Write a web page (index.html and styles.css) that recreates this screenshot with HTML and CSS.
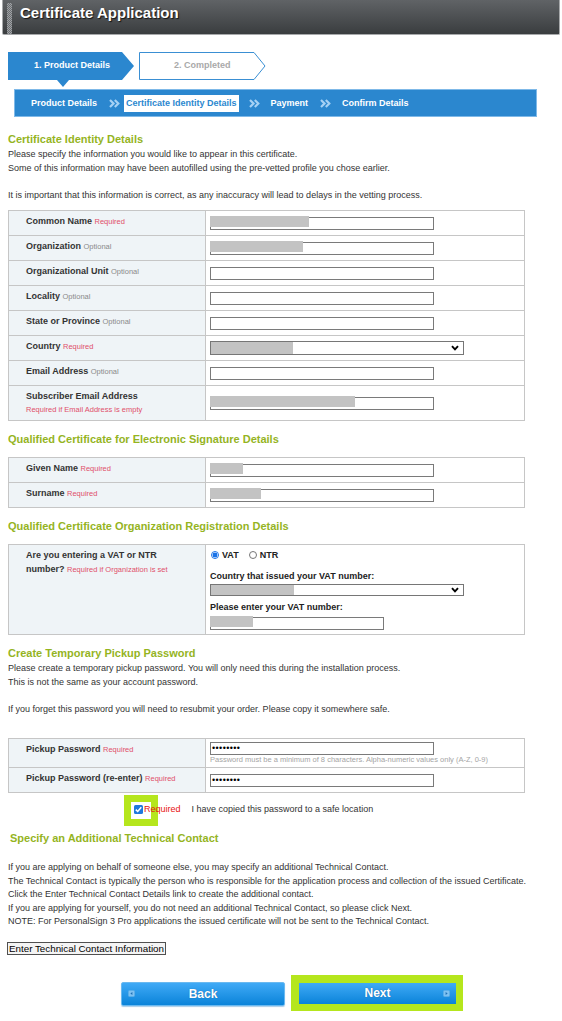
FILE: index.html
```html
<!DOCTYPE html>
<html lang="en">
<head>
<meta charset="utf-8">
<title>Certificate Application</title>
<link rel="stylesheet" href="styles.css">
</head>
<body>
<div class="header"><span class="grip"></span><h1 class="title">Certificate Application</h1></div>

<div class="steps">
  <div class="step step-active">
    <svg class="step-shape" width="127" height="36" viewBox="0 0 127 36"><polygon points="0,0 114,0 126,14 114,28 61,28 55,35 49,28 0,28" fill="#2b87cf"/></svg>
    <span class="step-label">1. Product Details</span>
  </div>
  <div class="step step-next">
    <svg class="step-shape" width="127" height="28" viewBox="0 0 127 28"><polygon points="0.5,0.5 115,0.5 126,14 115,27.5 0.5,27.5" fill="#fff" stroke="#3a8fd3"/></svg>
    <span class="step-label">2. Completed</span>
  </div>
</div>

<div class="crumbs">
  <span class="crumb">Product Details</span>
  <svg class="chev" width="11" height="9" viewBox="0 0 11 9"><path d="M1 1 L4.5 4.5 L1 8 M5.8 1 L9.3 4.5 L5.8 8" fill="none" stroke="#a6d1f4" stroke-width="2.2"/></svg>
  <span class="crumb crumb-current">Certificate Identity Details</span>
  <svg class="chev" width="11" height="9" viewBox="0 0 11 9"><path d="M1 1 L4.5 4.5 L1 8 M5.8 1 L9.3 4.5 L5.8 8" fill="none" stroke="#a6d1f4" stroke-width="2.2"/></svg>
  <span class="crumb">Payment</span>
  <svg class="chev" width="11" height="9" viewBox="0 0 11 9"><path d="M1 1 L4.5 4.5 L1 8 M5.8 1 L9.3 4.5 L5.8 8" fill="none" stroke="#a6d1f4" stroke-width="2.2"/></svg>
  <span class="crumb">Confirm Details</span>
</div>

<div class="content">
  <h2 class="sec-title">Certificate Identity Details</h2>
  <p class="text">Please specify the information you would like to appear in this certificate.<br>Some of this information may have been autofilled using the pre-vetted profile you chose earlier.<br><br>It is important that this information is correct, as any inaccuracy will lead to delays in the vetting process.</p>

  <div class="form">
    <div class="lbl">Common Name <span class="req">Required</span></div>
    <div class="fld"><div class="input"><span class="redact" style="width:99px"></span></div></div>

    <div class="lbl">Organization <span class="opt">Optional</span></div>
    <div class="fld"><div class="input"><span class="redact" style="width:93px"></span></div></div>

    <div class="lbl">Organizational Unit <span class="opt">Optional</span></div>
    <div class="fld"><div class="input"></div></div>

    <div class="lbl">Locality <span class="opt">Optional</span></div>
    <div class="fld"><div class="input"></div></div>

    <div class="lbl">State or Province <span class="opt">Optional</span></div>
    <div class="fld"><div class="input"></div></div>

    <div class="lbl">Country <span class="req">Required</span></div>
    <div class="fld"><div class="select"><span class="redact-sel" style="width:82px"></span><svg class="sel-arrow" width="8" height="6" viewBox="0 0 8 6"><path d="M1 1.2 L4 4.4 L7 1.2" fill="none" stroke="#000" stroke-width="1.9"/></svg></div></div>

    <div class="lbl">Email Address <span class="opt">Optional</span></div>
    <div class="fld"><div class="input"></div></div>

    <div class="lbl tall">Subscriber Email Address<span class="req-line">Required if Email Address is empty</span></div>
    <div class="fld tall"><div class="input"><span class="redact" style="width:145px"></span></div></div>
  </div>

  <h2 class="sec-title sec-gap">Qualified Certificate for Electronic Signature Details</h2>
  <div class="form form-after-title">
    <div class="lbl">Given Name <span class="req">Required</span></div>
    <div class="fld"><div class="input"><span class="redact" style="width:33px"></span></div></div>

    <div class="lbl">Surname <span class="req">Required</span></div>
    <div class="fld"><div class="input"><span class="redact" style="width:51px"></span></div></div>
  </div>

  <h2 class="sec-title sec-gap">Qualified Certificate Organization Registration Details</h2>
  <div class="form form-after-title">
    <div class="lbl lbl-vat"><span class="vat-line">Are you entering a VAT or NTR</span><span class="vat-line">number? <span class="req">Required if Organization is set</span></span></div>
    <div class="fld-col">
      <div class="radios">
        <span class="radio radio-on"></span><span class="radio-text">VAT</span>
        <span class="radio radio-off"></span><span class="radio-text">NTR</span>
      </div>
      <div class="vat-q">Country that issued your VAT number:</div>
      <div class="select select-sm"><span class="redact-sel" style="width:83px"></span><svg class="sel-arrow" width="8" height="6" viewBox="0 0 8 6"><path d="M1 1.2 L4 4.4 L7 1.2" fill="none" stroke="#000" stroke-width="1.9"/></svg></div>
      <div class="vat-q vat-q2">Please enter your VAT number:</div>
      <div class="input input-vat"><span class="redact" style="width:43px"></span></div>
    </div>
  </div>

  <h2 class="sec-title sec-gap">Create Temporary Pickup Password</h2>
  <p class="text">Please create a temporary pickup password. You will only need this during the installation process.<br>This is not the same as your account password.<br><br>If you forget this password you will need to resubmit your order. Please copy it somewhere safe.</p>

  <div class="form form-pw">
    <div class="lbl">Pickup Password <span class="req">Required</span></div>
    <div class="fld fld-pw">
      <div class="input input-pw">••••••••</div>
      <div class="hint">Password must be a minimum of 8 characters. Alpha-numeric values only (A-Z, 0-9)</div>
    </div>

    <div class="lbl">Pickup Password (re-enter) <span class="req">Required</span></div>
    <div class="fld"><div class="input input-pw">••••••••</div></div>
  </div>

  <div class="confirm">
    <span class="check-wrap"><span class="checkbox"><svg width="9" height="9" viewBox="0 0 9 9"><rect width="9" height="9" rx="1.5" fill="#1f78dd"/><path d="M1.8 4.6 L3.7 6.5 L7.3 2.3" fill="none" stroke="#fff" stroke-width="1.5"/></svg></span></span>
    <span class="confirm-req">Required</span>
    <span class="confirm-text">I have copied this password to a safe location</span>
  </div>

  <h2 class="sec-title tech-title">Specify an Additional Technical Contact</h2>
  <p class="text tech-text">If you are applying on behalf of someone else, you may specify an additional Technical Contact.<br>The Technical Contact is typically the person who is responsible for the application process and collection of the issued Certificate.<br>Click the Enter Technical Contact Details link to create the additional contact.<br>If you are applying for yourself, you do not need an additional Technical Contact, so please click Next.<br>NOTE: For PersonalSign 3 Pro applications the issued certificate will not be sent to the Technical Contact.</p>

  <button class="tech-btn" type="button">Enter Technical Contact Information</button>

  <div class="nav">
    <button class="navbtn navbtn-back" type="button">
      <svg class="btn-ico" width="7" height="7" viewBox="0 0 7 7"><rect x="0.5" y="0.5" width="6" height="6" rx="1" fill="#7dc1f2" stroke="#5aaee9"/><path d="M4.4 2 L2.4 3.5 L4.4 5 Z" fill="#1d6fb6"/></svg>
      <span class="btn-text">Back</span>
      <span class="btn-spacer"></span>
    </button>
    <div class="next-hl">
      <button class="navbtn navbtn-next" type="button">
        <span class="btn-spacer"></span>
        <span class="btn-text">Next</span>
        <svg class="btn-ico" width="7" height="7" viewBox="0 0 7 7"><rect x="0.5" y="0.5" width="6" height="6" rx="1" fill="#7dc1f2" stroke="#5aaee9"/><path d="M2.6 2 L4.6 3.5 L2.6 5 Z" fill="#1d6fb6"/></svg>
      </button>
    </div>
  </div>
</div>
</body>
</html>
```

FILE: styles.css
```css
*, *::before, *::after { box-sizing: border-box; }

body {
  margin: 0;
  width: 562px;
  font-family: "Liberation Sans", Arial, Helvetica, sans-serif;
  font-size: 9px;
  color: #333;
  background: #fff;
}

/* Header */
.header {
  display: flex;
  align-items: flex-start;
  height: 35px;
  margin: 0 2px;
  border: 1px solid #a7a9ab;
  border-top: none;
  border-radius: 0 0 2px 2px;
  background: linear-gradient(#606366, #3a3d3f);
}
.grip {
  width: 5px;
  height: 31px;
  margin: 3px 0 0 4px;
  background: repeating-conic-gradient(#a0a3a6 0 25%, #6b6e71 0 50%) 0 0 / 2px 2px;
}
.title {
  margin: 4px 0 0 8px;
  font-size: 15px;
  line-height: 18px;
  font-weight: bold;
  color: #fff;
  text-shadow: 1px 1px 1px #151515;
}

/* Steps */
.steps {
  display: flex;
  gap: 5px;
  margin: 17px 0 0 8px;
}
.step {
  position: relative;
  width: 126px;
  height: 28px;
}
.step-shape {
  position: absolute;
  left: 0;
  top: 0;
  overflow: visible;
}
.step-label {
  position: relative;
  display: block;
  line-height: 27px;
  font-size: 9px;
  font-weight: bold;
}
.step-active .step-label { color: #fff; padding-left: 26px; }
.step-next .step-label { color: #a9a9a9; padding-left: 35px; }

/* Crumb bar */
.crumbs {
  display: flex;
  align-items: center;
  width: 523px;
  height: 28px;
  margin: 9px 0 0 14px;
  padding-left: 16px;
  background: #2b87cf;
  border: 1px solid #7fb9e8;
}
.crumb {
  color: #fff;
  font-size: 9px;
  font-weight: bold;
}
.crumb-current {
  background: #fff;
  color: #2b87cf;
  padding: 0 2px;
  line-height: 17px;
  margin-left: -7px;
  margin-right: -2px;
}
.chev {
  display: block;
  margin: 0 11px 0 12px;
}

/* Content */
.content {
  padding: 15px 8px 20px;
}
.sec-title {
  margin: 0;
  font-size: 11px;
  line-height: 14px;
  font-weight: bold;
  color: #95b41f;
}
.sec-gap { margin-top: 11px; }
.text {
  margin: 2px 0 0;
  line-height: 13.5px;
  color: #333;
}

/* Forms */
.form {
  margin-top: 8px;
  width: 517px;
  display: grid;
  grid-template-columns: 197px 1fr;
  border: 1px solid #c6c6c6;
  border-bottom: none;
}
.form-after-title { margin-top: 11px; }
.lbl {
  background: #eff4f7;
  border-right: 1px solid #c6c6c6;
  border-bottom: 1px solid #c6c6c6;
  padding: 3px 20px 0 17px;
  line-height: 14px;
  font-weight: bold;
  color: #333;
  min-height: 25px;
}
.lbl-vat .vat-line { display: block; }
.fld {
  border-bottom: 1px solid #c6c6c6;
  display: flex;
  align-items: center;
  padding-left: 4px;
  min-height: 25px;
}
.tall { min-height: 35px; }
.req {
  color: #e0506b;
  font-weight: normal;
  font-size: 7.5px;
}
.opt {
  color: #8a8a8a;
  font-weight: normal;
  font-size: 7.5px;
}
.req-line {
  display: block;
  color: #e0506b;
  font-weight: normal;
  font-size: 7.5px;
}
.input {
  width: 224px;
  height: 13px;
  border: 1px solid #7a7a7a;
  background: #fff;
  display: flex;
  align-items: flex-start;
}
.redact {
  display: block;
  flex: none;
  height: 11px;
  margin: -2px 0 0 -1px;
  background: #c3c3c3;
}
.select {
  width: 254px;
  height: 14px;
  border: 1px solid #767676;
  background: #fff;
  display: flex;
  align-items: stretch;
  justify-content: space-between;
  padding-right: 4px;
}
.select-sm { height: 12px; margin-top: 1px; }
.redact-sel {
  display: block;
  background: #c3c3c3;
}
.sel-arrow {
  align-self: center;
  display: block;
}

/* VAT cell */
.fld-col {
  border-bottom: 1px solid #c6c6c6;
  padding: 3px 0 4px 4px;
}
.radios {
  display: flex;
  align-items: center;
  height: 13px;
}
.radio {
  display: block;
  width: 8px;
  height: 8px;
  border-radius: 50%;
  margin: 0 3px 0 1px;
}
.radio-on {
  border: 1px solid #1a73e8;
  background: radial-gradient(circle, #1a73e8 0 2.2px, #fff 2.7px);
}
.radio-off {
  border: 1px solid #767676;
  background: #fff;
  margin-left: 10px;
}
.radio-text {
  font-weight: bold;
  color: #222;
}
.vat-q {
  margin-top: 8px;
  line-height: 14px;
  font-weight: bold;
  color: #222;
}
.vat-q2 { margin-top: 4px; }
.input-vat { width: 174px; margin-top: 3px; }

/* Password */
.form-pw { margin-top: 22px; }
.fld-pw {
  flex-direction: column;
  align-items: flex-start;
  justify-content: flex-start;
  padding-top: 3px;
  padding-bottom: 2px;
}
.input-pw {
  align-items: center;
  font-size: 9px;
  line-height: 11px;
  letter-spacing: 0.4px;
  color: #000;
  padding-left: 1px;
}
.hint {
  line-height: 10px;
  font-size: 7.5px;
  color: #a5a5a5;
}

/* Confirm checkbox */
.confirm {
  display: flex;
  align-items: center;
  margin-top: 9px;
  padding-left: 126px;
  line-height: 14px;
}
.check-wrap {
  position: relative;
  display: block;
  width: 9px;
  height: 9px;
}
.check-wrap::before {
  content: "";
  position: absolute;
  left: -10px;
  top: -10px;
  width: 34px;
  height: 31px;
  border: 7px solid #b5e61d;
}
.checkbox {
  position: relative;
  display: block;
  width: 9px;
  height: 9px;
}
.checkbox svg { display: block; }
.confirm-req {
  position: relative;
  color: #e81010;
  margin-left: 1px;
}
.confirm-text {
  margin-left: 11px;
  color: #333;
}

/* Technical contact */
.tech-title {
  margin-top: 15px;
  padding-left: 2px;
}
.tech-text { margin-top: 16px; }
.tech-btn {
  display: block;
  margin: 13px 0 0 -1px;
  height: 13px;
  padding: 0 1px;
  font-family: "Liberation Sans", Arial, Helvetica, sans-serif;
  font-size: 9.8px;
  line-height: 11px;
  color: #000;
  background: #f4f4f4;
  border: 1px solid #505050;
  border-radius: 0;
}

/* Nav buttons */
.nav {
  display: flex;
  align-items: flex-start;
  margin-top: 20px;
  padding-left: 113px;
}
.navbtn {
  display: flex;
  align-items: center;
  padding: 0 6px;
  font-family: "Liberation Sans", Arial, Helvetica, sans-serif;
  font-size: 12px;
  font-weight: bold;
  color: #fff;
  text-shadow: 0 0 1px #1b5f99;
  background: linear-gradient(#40aaf6, #0a83d9);
  cursor: pointer;
}
.navbtn-back {
  width: 164px;
  height: 24px;
  margin-top: 7px;
  border: 1px solid #6ab9f0;
  border-radius: 2px;
  box-shadow: 0 1px 1px #a9cde8;
}
.navbtn-next {
  width: 157px;
  height: 21px;
  border: none;
  border-radius: 0;
}
.btn-text {
  flex: 1;
  text-align: center;
}
.btn-ico { display: block; flex: none; }
.btn-spacer { display: block; width: 7px; flex: none; }
.next-hl {
  margin-left: 6px;
  border-style: solid;
  border-color: #b5e61d;
  border-width: 8px 7px 7px 8px;
}
```
